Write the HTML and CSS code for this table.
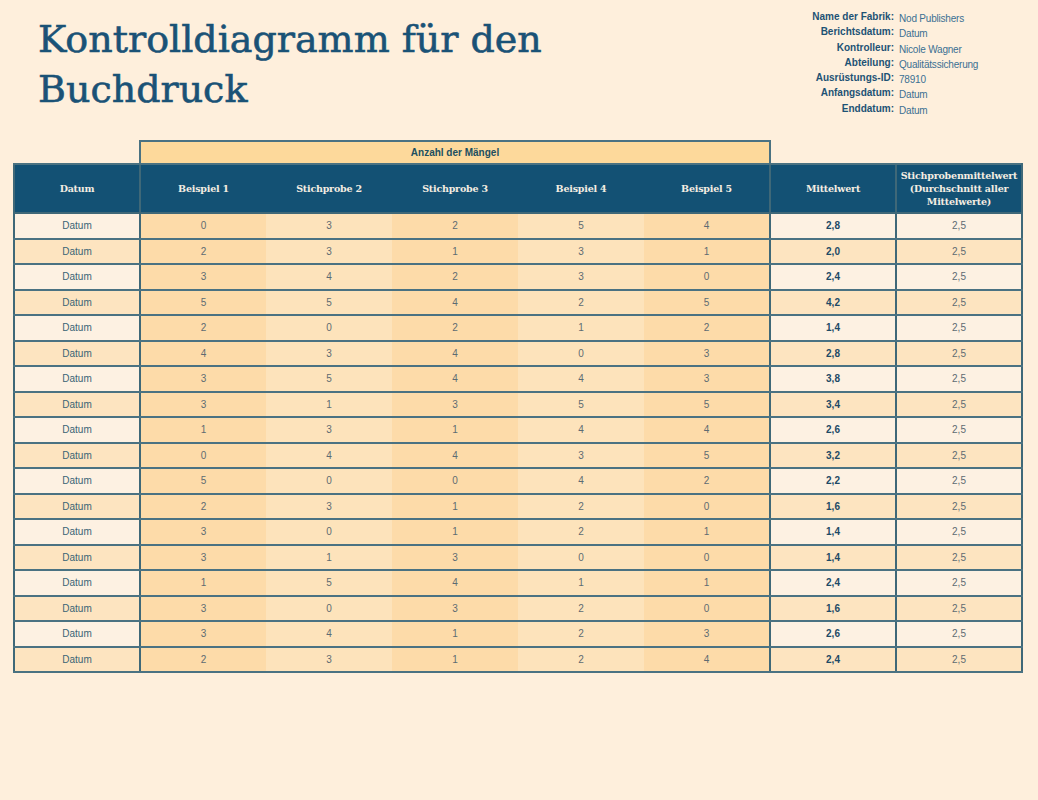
FILE: index.html
```html
<!DOCTYPE html>
<html lang="de">
<head>
<meta charset="utf-8">
<title>Kontrolldiagramm für den Buchdruck</title>
<link rel="stylesheet" href="styles.css">
</head>
<body>
<div class="page">
  <header class="top">
    <h1 class="title">Kontrolldiagramm für den<br>Buchdruck</h1>
    <dl class="info">
      <dt>Name der Fabrik:</dt><dd>Nod Publishers</dd>
      <dt>Berichtsdatum:</dt><dd>Datum</dd>
      <dt>Kontrolleur:</dt><dd>Nicole Wagner</dd>
      <dt>Abteilung:</dt><dd>Qualitätssicherung</dd>
      <dt>Ausrüstungs-ID:</dt><dd>78910</dd>
      <dt>Anfangsdatum:</dt><dd>Datum</dd>
      <dt>Enddatum:</dt><dd>Datum</dd>
    </dl>
  </header>
  <table class="chart">
    <colgroup>
      <col><col><col><col><col><col><col><col>
    </colgroup>
    <thead>
      <tr class="group-row">
        <td class="blank"></td>
        <th class="group" colspan="5">Anzahl der Mängel</th>
        <td class="blank" colspan="2"></td>
      </tr>
      <tr class="head-row">
        <th class="c-date">Datum</th>
        <th class="c-first">Beispiel 1</th>
        <th>Stichprobe 2</th>
        <th>Stichprobe 3</th>
        <th>Beispiel 4</th>
        <th>Beispiel 5</th>
        <th class="c-mean">Mittelwert</th>
        <th class="c-avg">Stichprobenmittelwert (Durchschnitt aller Mittelwerte)</th>
      </tr>
    </thead>
    <tbody>
      <tr><td class="c-date">Datum</td><td class="c-first s-dark">0</td><td class="s-light">3</td><td class="s-dark">2</td><td class="s-light">5</td><td class="s-dark">4</td><td class="c-mean">2,8</td><td class="c-avg">2,5</td></tr>
      <tr><td class="c-date">Datum</td><td class="c-first s-dark">2</td><td class="s-light">3</td><td class="s-dark">1</td><td class="s-light">3</td><td class="s-dark">1</td><td class="c-mean">2,0</td><td class="c-avg">2,5</td></tr>
      <tr><td class="c-date">Datum</td><td class="c-first s-dark">3</td><td class="s-light">4</td><td class="s-dark">2</td><td class="s-light">3</td><td class="s-dark">0</td><td class="c-mean">2,4</td><td class="c-avg">2,5</td></tr>
      <tr><td class="c-date">Datum</td><td class="c-first s-dark">5</td><td class="s-light">5</td><td class="s-dark">4</td><td class="s-light">2</td><td class="s-dark">5</td><td class="c-mean">4,2</td><td class="c-avg">2,5</td></tr>
      <tr><td class="c-date">Datum</td><td class="c-first s-dark">2</td><td class="s-light">0</td><td class="s-dark">2</td><td class="s-light">1</td><td class="s-dark">2</td><td class="c-mean">1,4</td><td class="c-avg">2,5</td></tr>
      <tr><td class="c-date">Datum</td><td class="c-first s-dark">4</td><td class="s-light">3</td><td class="s-dark">4</td><td class="s-light">0</td><td class="s-dark">3</td><td class="c-mean">2,8</td><td class="c-avg">2,5</td></tr>
      <tr><td class="c-date">Datum</td><td class="c-first s-dark">3</td><td class="s-light">5</td><td class="s-dark">4</td><td class="s-light">4</td><td class="s-dark">3</td><td class="c-mean">3,8</td><td class="c-avg">2,5</td></tr>
      <tr><td class="c-date">Datum</td><td class="c-first s-dark">3</td><td class="s-light">1</td><td class="s-dark">3</td><td class="s-light">5</td><td class="s-dark">5</td><td class="c-mean">3,4</td><td class="c-avg">2,5</td></tr>
      <tr><td class="c-date">Datum</td><td class="c-first s-dark">1</td><td class="s-light">3</td><td class="s-dark">1</td><td class="s-light">4</td><td class="s-dark">4</td><td class="c-mean">2,6</td><td class="c-avg">2,5</td></tr>
      <tr><td class="c-date">Datum</td><td class="c-first s-dark">0</td><td class="s-light">4</td><td class="s-dark">4</td><td class="s-light">3</td><td class="s-dark">5</td><td class="c-mean">3,2</td><td class="c-avg">2,5</td></tr>
      <tr><td class="c-date">Datum</td><td class="c-first s-dark">5</td><td class="s-light">0</td><td class="s-dark">0</td><td class="s-light">4</td><td class="s-dark">2</td><td class="c-mean">2,2</td><td class="c-avg">2,5</td></tr>
      <tr><td class="c-date">Datum</td><td class="c-first s-dark">2</td><td class="s-light">3</td><td class="s-dark">1</td><td class="s-light">2</td><td class="s-dark">0</td><td class="c-mean">1,6</td><td class="c-avg">2,5</td></tr>
      <tr><td class="c-date">Datum</td><td class="c-first s-dark">3</td><td class="s-light">0</td><td class="s-dark">1</td><td class="s-light">2</td><td class="s-dark">1</td><td class="c-mean">1,4</td><td class="c-avg">2,5</td></tr>
      <tr><td class="c-date">Datum</td><td class="c-first s-dark">3</td><td class="s-light">1</td><td class="s-dark">3</td><td class="s-light">0</td><td class="s-dark">0</td><td class="c-mean">1,4</td><td class="c-avg">2,5</td></tr>
      <tr><td class="c-date">Datum</td><td class="c-first s-dark">1</td><td class="s-light">5</td><td class="s-dark">4</td><td class="s-light">1</td><td class="s-dark">1</td><td class="c-mean">2,4</td><td class="c-avg">2,5</td></tr>
      <tr><td class="c-date">Datum</td><td class="c-first s-dark">3</td><td class="s-light">0</td><td class="s-dark">3</td><td class="s-light">2</td><td class="s-dark">0</td><td class="c-mean">1,6</td><td class="c-avg">2,5</td></tr>
      <tr><td class="c-date">Datum</td><td class="c-first s-dark">3</td><td class="s-light">4</td><td class="s-dark">1</td><td class="s-light">2</td><td class="s-dark">3</td><td class="c-mean">2,6</td><td class="c-avg">2,5</td></tr>
      <tr><td class="c-date">Datum</td><td class="c-first s-dark">2</td><td class="s-light">3</td><td class="s-dark">1</td><td class="s-light">2</td><td class="s-dark">4</td><td class="c-mean">2,4</td><td class="c-avg">2,5</td></tr>
    </tbody>
  </table>
</div>
</body>
</html>
```
FILE: styles.css
```css
html, body {
  margin: 0;
  padding: 0;
  background: #feefdc;
}

.page {
  width: 1038px;
  min-height: 800px;
  font-family: "Liberation Sans", Arial, sans-serif;
}

.top {
  display: flex;
  align-items: flex-start;
  height: 140px;
}

.title {
  width: 770px;
  margin: 0;
  padding: 14px 0 0 38px;
  box-sizing: border-box;
  font-family: "DejaVu Serif", serif;
  font-weight: normal;
  font-size: 38px;
  line-height: 50px;
  color: #1a5276;
  letter-spacing: 0;
  -webkit-text-stroke: 0.6px #1a5276;
}

.info {
  margin: 10px 0 0 38px;
  display: grid;
  grid-template-columns: 86px auto;
  column-gap: 5px;
  font-size: 10px;
  line-height: 15.3px;
}

.info dt {
  text-align: right;
  font-weight: bold;
  color: #1d5274;
  white-space: nowrap;
  line-height: 13.3px;
}

.info dd {
  margin: 0;
  padding-top: 2px;
  line-height: 13.3px;
  color: #3b6f93;
  white-space: nowrap;
  letter-spacing: -0.2px;
}

.chart {
  margin-left: 13px;
  width: 1010px;
  table-layout: fixed;
  border-collapse: collapse;
  font-size: 10px;
}

.chart td,
.chart th {
  padding: 0;
  text-align: center;
}

.blank {
  border: none;
  background: transparent;
}

.group-row {
  height: 23px;
}

.group {
  background: #fdd99b;
  border: 2px solid #4a7282;
  color: #204f60;
  font-weight: bold;
  font-size: 10px;
  vertical-align: middle;
}

.head-row th {
  height: 47px;
  background: #135174;
  color: #f4ede2;
  font-family: "DejaVu Serif", serif;
  font-weight: bold;
  font-size: 9.5px;
  line-height: 13px;
  letter-spacing: -0.2px;
  border-top: 2px solid #4a7282;
  border-bottom: 2px solid #3f6878;
}

.head-row .c-avg {
  padding: 0 2px;
}

.chart tbody td {
  height: 25.5px;
  box-sizing: border-box;
  border-bottom: 2px solid #4a7282;
  color: #5d6b72;
}

.c-date,
.c-first,
.c-mean,
.c-avg {
  border-left: 2px solid #3f6878;
}

.c-avg {
  border-right: 2px solid #3f6878;
}

.chart tbody .c-date {
  color: #3a6476;
}

.chart tbody .c-mean {
  color: #1e4a66;
  font-weight: bold;
}

.chart tbody tr:nth-child(odd) .c-date,
.chart tbody tr:nth-child(odd) .c-mean,
.chart tbody tr:nth-child(odd) .c-avg {
  background: #fdf1e2;
}

.chart tbody tr:nth-child(even) .c-date,
.chart tbody tr:nth-child(even) .c-mean,
.chart tbody tr:nth-child(even) .c-avg {
  background: #fde4c0;
}

.s-dark {
  background: #fddba9;
}

.s-light {
  background: #fde3bb;
}
```
